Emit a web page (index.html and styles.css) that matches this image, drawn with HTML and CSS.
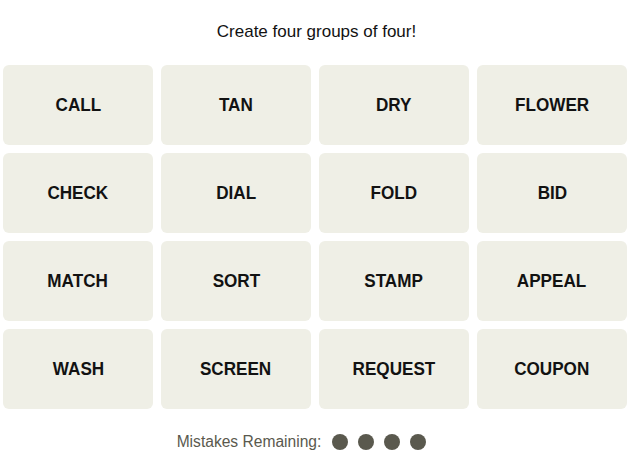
FILE: index.html
```html
<!DOCTYPE html>
<html>
<head>
<meta charset="utf-8">
<link rel="stylesheet" href="styles.css">
</head>
<body>
<div class="page">
  <div class="title">Create four groups of four!</div>
  <div class="grid">
    <div class="tile"><span class="word">CALL</span></div>
    <div class="tile"><span class="word">TAN</span></div>
    <div class="tile"><span class="word">DRY</span></div>
    <div class="tile"><span class="word">FLOWER</span></div>
    <div class="tile"><span class="word">CHECK</span></div>
    <div class="tile"><span class="word">DIAL</span></div>
    <div class="tile"><span class="word">FOLD</span></div>
    <div class="tile"><span class="word">BID</span></div>
    <div class="tile"><span class="word">MATCH</span></div>
    <div class="tile"><span class="word">SORT</span></div>
    <div class="tile"><span class="word">STAMP</span></div>
    <div class="tile"><span class="word">APPEAL</span></div>
    <div class="tile"><span class="word">WASH</span></div>
    <div class="tile"><span class="word">SCREEN</span></div>
    <div class="tile"><span class="word">REQUEST</span></div>
    <div class="tile"><span class="word">COUPON</span></div>
  </div>
  <div class="mistakes">
    <span class="label">Mistakes Remaining:</span>
    <span class="dots"><span class="dot"></span><span class="dot"></span><span class="dot"></span><span class="dot"></span></span>
  </div>
</div>
</body>
</html>
```
FILE: styles.css
```css
html, body {
  margin: 0;
  padding: 0;
  background: #ffffff;
}
.page {
  width: 633px;
  height: 455px;
  overflow: hidden;
}
.title {
  height: 65px;
  padding-top: 22px;
  box-sizing: border-box;
  text-align: center;
  font-family: "Liberation Sans", sans-serif;
  font-size: 17px;
  line-height: 20px;
  color: #121212;
}
.grid {
  padding-left: 3px;
  display: grid;
  grid-template-columns: repeat(4, 150px);
  grid-auto-rows: 80px;
  gap: 8px;
}
.tile {
  background: #efefe6;
  border-radius: 6px;
  display: flex;
  align-items: center;
  justify-content: center;
  font-family: "Liberation Sans", sans-serif;
  font-weight: 700;
  font-size: 19px;
  color: #121212;
}
.word {
  display: inline-block;
  transform: scaleX(0.9);
}
.mistakes {
  margin-top: 24px;
  padding-right: 30px;
  display: flex;
  align-items: center;
  justify-content: center;
  gap: 11px;
}
.label {
  font-family: "Liberation Sans", sans-serif;
  font-size: 15.6px;
  color: #5a594e;
}
.dots {
  display: flex;
  gap: 10px;
}
.dot {
  width: 16px;
  height: 16px;
  border-radius: 50%;
  background: #5a594e;
}
```
